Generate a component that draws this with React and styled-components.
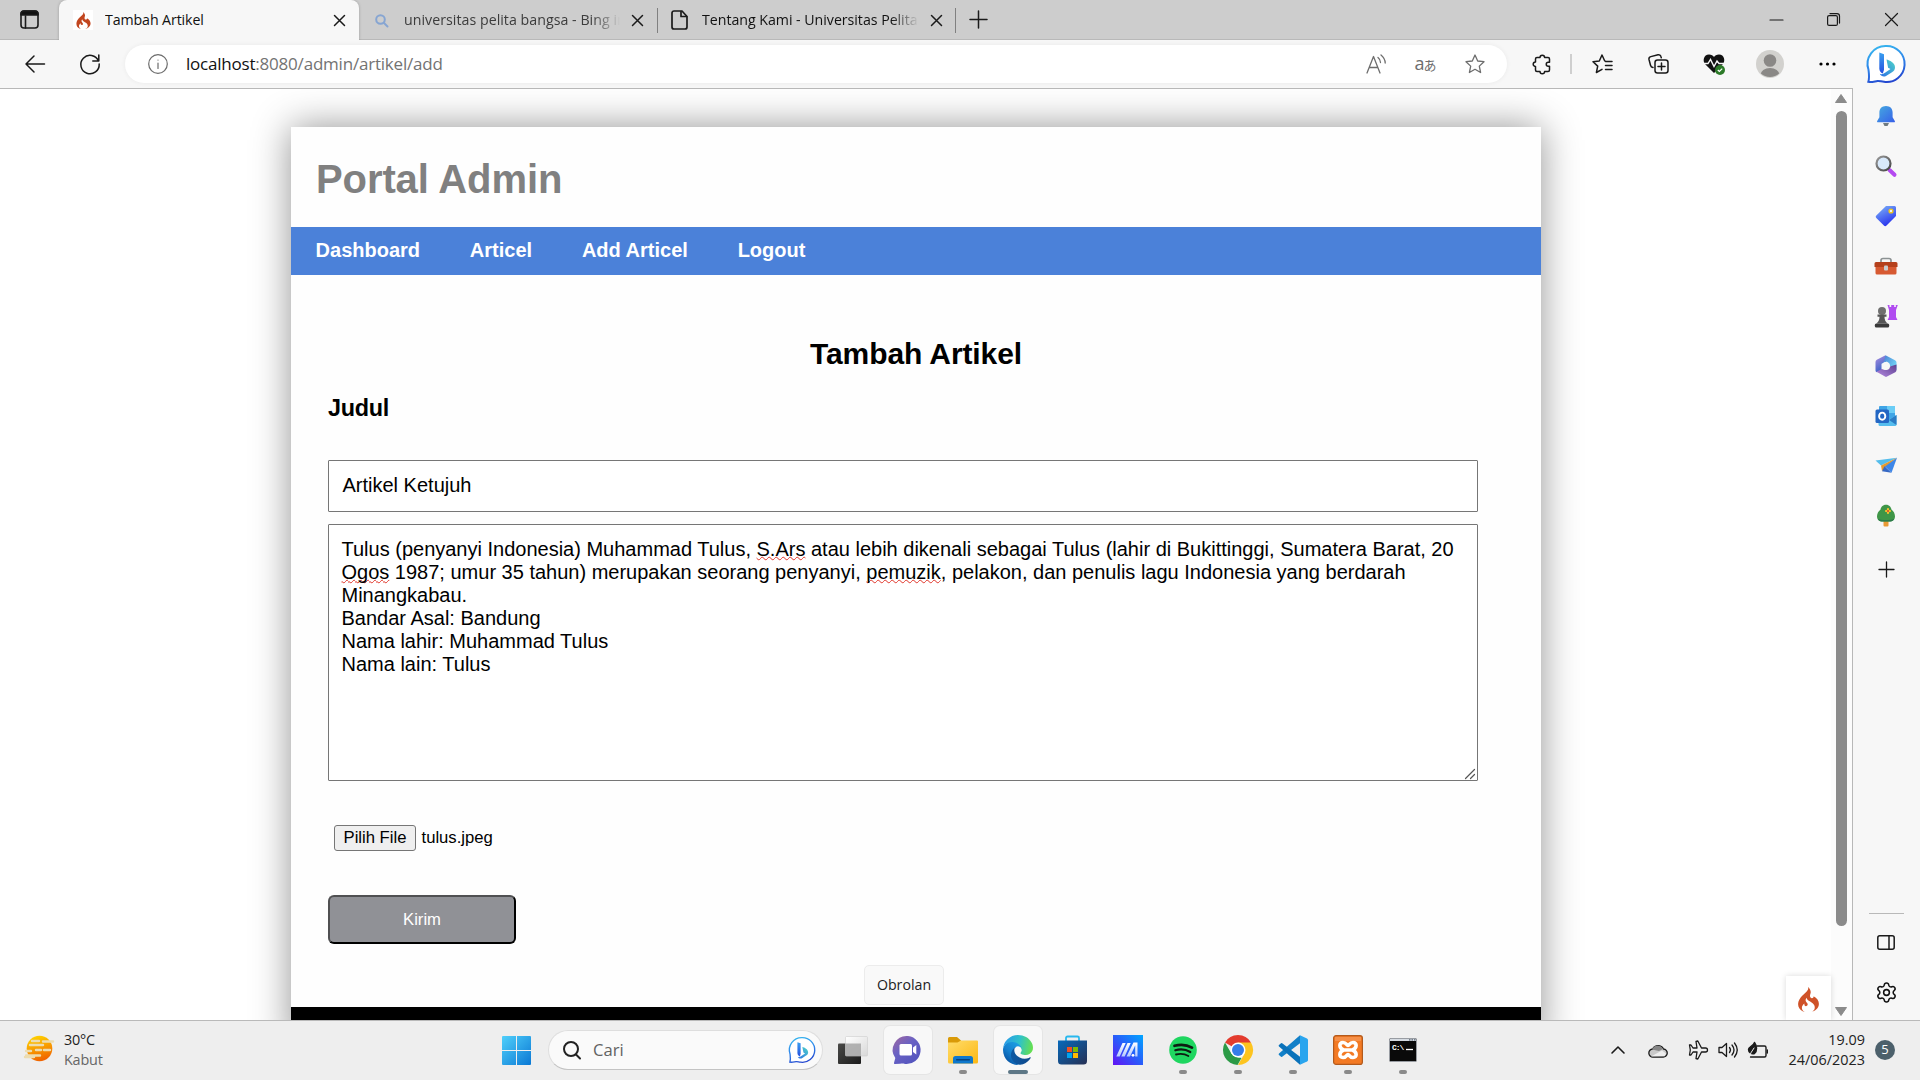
import React from "react";
import styled, { createGlobalStyle, css } from "styled-components";
import { Settings } from "lucide-react";
import { SiCodeigniter } from "react-icons/si";

const Global = createGlobalStyle`
  *, *::before, *::after { box-sizing: border-box; }
  html, body { margin: 0; padding: 0; overflow: hidden; }
  svg { display: block; flex: none; overflow: visible; }
  h1, h2, h3 { margin: 0; }
`;

const ui = `"Open Sans", "Noto Sans", sans-serif`;
const arial = `"Liberation Sans", Arial, sans-serif`;

const Screen = styled.div`
  width: 1920px;
  height: 1080px;
  display: flex;
  flex-direction: column;
  overflow: hidden;
  background: #fff;
  font-family: ${ui};
  color: #111;
`;

/* ---------- tab strip ---------- */
const TabStrip = styled.div`
  height: 40px;
  flex: none;
  display: flex;
  background: #cdcdcd;
  box-shadow: inset 0 -1px 0 #b9b9b9;
`;
const TabMenu = styled.div`
  width: 59px;
  height: 39px;
  display: flex;
  align-items: center;
  justify-content: center;
`;
const Tab = styled.div`
  width: ${(p) => p.$w}px;
  height: 40px;
  display: flex;
  align-items: center;
  padding: 0 ${(p) => p.$right}px 0 ${(p) => p.$left}px;
  ${(p) =>
    p.$active &&
    css`
      background: #f7f7f7;
      border-radius: 8px 8px 0 0;
      box-shadow: 0 0 3px rgba(0, 0, 0, 0.25);
      clip-path: inset(-4px -4px 0 -4px);
    `}
`;
const TabIcon = styled.div`
  width: 20px;
  height: 20px;
  flex: none;
  display: flex;
  align-items: center;
  justify-content: center;
  background: ${(p) => p.$bg || "none"};
`;
const TabTitle = styled.div`
  flex: 1;
  min-width: 0;
  margin-left: ${(p) => p.$gap}px;
  margin-right: ${(p) => p.$after}px;
  height: 22px;
  line-height: 21px;
  font-size: 14.2px;
  letter-spacing: ${(p) => p.$ls || 0}px;
  color: ${(p) => p.$color || "#111"};
  white-space: nowrap;
  overflow: hidden;
  ${(p) => p.$fade && css`mask-image: linear-gradient(to right, #000 calc(100% - 28px), transparent);`}
`;
const TabDivider = styled.div`
  width: 1px;
  height: 25px;
  margin-top: 8px;
  background: #808080;
`;
const NewTab = styled.div`
  width: 44px;
  height: 39px;
  display: flex;
  align-items: center;
  justify-content: center;
`;
const WindowControls = styled.div`
  margin-left: auto;
  height: 39px;
  display: flex;
`;
const WindowButton = styled.div`
  width: 57.5px;
  height: 39px;
  display: flex;
  align-items: center;
  justify-content: center;
`;

/* ---------- toolbar ---------- */
const Toolbar = styled.div`
  height: 48px;
  flex: none;
  display: flex;
  align-items: center;
  background: #f7f7f7;
`;
const Slot = styled.div`
  width: ${(p) => p.$w}px;
  height: 48px;
  flex: none;
  display: flex;
  align-items: center;
  justify-content: center;
`;
const AddressBar = styled.div`
  width: 1382px;
  height: 38px;
  margin-top: -1px;
  display: flex;
  align-items: center;
  background: #fff;
  border-radius: 19px;
  box-shadow: 0 0 5px rgba(0, 0, 0, 0.06);
`;
const Url = styled.div`
  flex: 1;
  margin-left: -4px;
  line-height: 24px;
  font-size: 17px;
  letter-spacing: -0.21px;
  color: #737373;
  span { color: #111; }
`;
const ToolDivider = styled.div`
  width: 2px;
  height: 20px;
  margin: 0 2px 0 1px;
  background: #cfcfcf;
`;
const Translate = styled.div`
  display: flex;
  align-items: baseline;
  font-size: 18px;
  line-height: 20px;
  color: #6d6d6d;
  span { font-family: "Noto Sans CJK JP", sans-serif; font-size: 13px; margin-left: -1px; }
`;

/* ---------- browser body ---------- */
const Body = styled.div`
  height: 932px;
  flex: none;
  display: flex;
  background: #f7f7f7;
`;
const Viewport = styled.div`
  position: relative;
  width: 1853px;
  display: flex;
  overflow: hidden;
  background: #fff;
  border-top: 1px solid #b8b8b8;
  border-right: 1px solid #b8b8b8;
`;
const Page = styled.div`
  width: 1831px;
  overflow: hidden;
  padding: 38px 0 0 291px;
  font-family: ${arial};
  color: #000;
`;
const Container = styled.div`
  width: 1250px;
  height: 920px;
  display: flex;
  flex-direction: column;
  background: #fefefe;
  box-shadow: 0 0 36px rgba(0, 0, 0, 0.43);
`;
const Brand = styled.h1`
  height: 100px;
  padding: 29px 25px 0;
  font-size: 40px;
  line-height: 46px;
  letter-spacing: -0.1px;
  color: #808080;
`;
const Nav = styled.nav`
  height: 48px;
  display: flex;
  gap: 49.8px;
  padding: 12px 24.6px 0;
  background: #4b81d9;
  color: #fff;
  font-size: 20px;
  line-height: 23px;
  font-weight: bold;
`;
const Form = styled.div`
  height: 732px;
  padding: 62px 63px 0 37px;
  display: flex;
  flex-direction: column;
  align-items: flex-start;
`;
const Heading = styled.h2`
  width: 1176px;
  font-size: 30px;
  line-height: 34px;
  letter-spacing: -0.1px;
  text-align: center;
`;
const Label = styled.h3`
  margin-top: 24px;
  font-size: 23.4px;
  line-height: 27px;
  letter-spacing: -0.3px;
`;
const TitleField = styled.div`
  width: 1150px;
  height: 52px;
  margin-top: 38px;
  padding: 13px 13.5px 0;
  border: 1px solid #767676;
  border-radius: 1px;
  background: #fff;
  font-size: 20px;
  line-height: 23px;
`;
const ContentField = styled.div`
  position: relative;
  width: 1150px;
  height: 257px;
  margin-top: 12px;
  padding: 13px 12.5px 0;
  border: 1px solid #767676;
  border-radius: 1px;
  background: #fff;
  font-size: 20px;
  line-height: 23px;
`;
const Line = styled.div`
  height: 23px;
  white-space: nowrap;
`;
const Misspelled = styled.span`
  text-decoration: underline wavy #e0352a 1px;
  text-decoration-skip-ink: none;
  text-underline-offset: 0px;
`;
const Grip = styled.div`
  position: absolute;
  right: 2px;
  bottom: 1px;
`;
const FileRow = styled.div`
  display: flex;
  align-items: center;
  gap: 5.500px;
  margin: 44px 0 0 6px;
  height: 26px;
  font-size: 16.67px;
`;
const FileButton = styled.div`
  width: 82px;
  height: 26px;
  border: 1px solid #767676;
  border-radius: 3px;
  background: #efefef;
  line-height: 24px;
  text-align: center;
`;
const Submit = styled.div`
  width: 188px;
  height: 49px;
  margin-top: 44px;
  border: 2px solid;
  border-color: #505052 #000 #000 #505052;
  border-radius: 6px;
  background: #909196;
  color: #fff;
  font-size: 16.67px;
  line-height: 45px;
  text-align: center;
`;
const Footer = styled.div`
  flex: 1;
  background: #000;
`;
const DebugBadge = styled.div`
  position: absolute;
  right: 21px;
  bottom: 0;
  width: 45px;
  height: 44px;
  display: flex;
  align-items: center;
  justify-content: center;
  background: #fff;
  box-shadow: 0 0 6px rgba(0, 0, 0, 0.15);
  color: #cf5228;
  padding: 2px 1px 0 0;
`;
const ScrollTrack = styled.div`
  width: 21px;
  display: flex;
  flex-direction: column;
  align-items: center;
  padding: 5px 1px 4px 0;
  background: #fcfcfc;
`;
const ScrollThumb = styled.div`
  width: 11px;
  height: 815px;
  margin-top: 8px;
  margin-bottom: auto;
  border-radius: 6px;
  background: #8b8b8b;
`;
const Sidebar = styled.div`
  width: 67px;
  display: flex;
  flex-direction: column;
  align-items: center;
  padding: 2.500px 1px 0 0;
`;
const SideItem = styled.div`
  width: 50px;
  height: ${(p) => p.$h || 50}px;
  flex: none;
  display: flex;
  align-items: center;
  justify-content: center;
`;
const SideRule = styled.div`
  width: 35px;
  height: 1px;
  margin-top: auto;
  background: #b9b9b9;
`;

/* ---------- taskbar ---------- */
const Taskbar = styled.div`
  position: relative;
  height: 60px;
  flex: none;
  display: flex;
  background: #eeeeee;
  border-top: 1px solid #b9b9b9;
`;
const Weather = styled.div`
  width: 489px;
  display: flex;
  padding: 9px 0 0 23px;
  gap: 9px;
  svg { margin-top: 5px; }
`;
const WeatherText = styled.div`
  font-size: 14.4px;
  line-height: 20px;
  letter-spacing: -0.2px;
  color: ${(p) => (p.$dim ? "#666" : "#222")};
`;
const TaskItem = styled.div`
  position: relative;
  width: ${(p) => p.$w || 55}px;
  height: 58px;
  flex: none;
  display: flex;
  align-items: center;
  justify-content: center;
`;
const TaskTile = styled.div`
  width: 48px;
  height: 48px;
  display: flex;
  align-items: center;
  justify-content: center;
  border-radius: 6px;
  ${(p) => p.$on && css`background: #f8f8f8; box-shadow: 0 0 0 1px #e5e5e5;`}
`;
const Running = styled.div`
  position: absolute;
  left: calc(50% - ${(p) => (p.$active ? 10 : 4)}px);
  bottom: 5px;
  width: ${(p) => (p.$active ? 20 : 8)}px;
  height: 4px;
  border-radius: 2px;
  background: ${(p) => (p.$active ? "#5d7786" : "#8a8a8a")};
`;
const SearchBox = styled.div`
  width: 275px;
  height: 40px;
  margin: 9px 2px 0 4px;
  padding: 0 7px 0 14px;
  display: flex;
  align-items: center;
  background: #fafafa;
  border: 1px solid #dedede;
  border-bottom-color: #c4c4c4;
  border-radius: 20px;
`;
const SearchText = styled.div`
  flex: 1;
  margin-left: 12px;
  font-size: 16.6px;
  line-height: 24px;
  color: #626262;
`;
const Tray = styled.div`
  margin-left: auto;
  width: 320px;
  display: flex;
  height: 58px;
  align-items: center;
`;
const TrayItem = styled.div`
  width: ${(p) => p.$w}px;
  display: flex;
  justify-content: center;
`;
const Clock = styled.div`
  width: 89px;
  text-align: right;
  font-size: 14.4px;
  line-height: 20px;
  color: #222;
  margin-top: -1px;
`;
const Badge = styled.div`
  width: 20px;
  height: 20px;
  margin-left: 10px;
  border-radius: 50%;
  background: #4c606b;
  color: #fff;
  font-size: 13px;
  line-height: 19px;
  text-align: center;
`;
const Tooltip = styled.div`
  position: absolute;
  left: 864px;
  top: -56px;
  width: 80px;
  height: 40px;
  border: 1px solid #ececec;
  border-radius: 5px;
  background: #f9f9f9;
  font-size: 14.2px;
  line-height: 37px;
  text-align: center;
  color: #222;
`;

/* ---------- icons ---------- */
const S = ({ w, h = w, vb, sw = 1.3, c = "#1a1a1a", children }) => (
  <svg width={w} height={h} viewBox={vb || `0 0 ${w} ${h}`} fill="none" stroke={c} strokeWidth={sw} strokeLinecap="round" strokeLinejoin="round">
    {children}
  </svg>
);
const F = ({ w, h = w, vb, children }) => (
  <svg width={w} height={h} viewBox={vb || `0 0 ${w} ${h}`}>{children}</svg>
);
const Cross = ({ size = 11, sw = 1.5 }) => (
  <S w={size} sw={sw}><path d={`M.5 .5L${size - 0.5} ${size - 0.5}M${size - 0.5} .5L.5 ${size - 0.5}`} /></S>
);
const Plus = ({ size, sw = 1.3 }) => (
  <S w={size} sw={sw}><path d={`M0 ${size / 2}H${size}M${size / 2} 0V${size}`} /></S>
);

const BingMark = ({ size, id }) => (
  <F w={size} vb="0 0 38 38">
    <defs>
      <linearGradient id={id} x1="0.3" y1="0" x2="0.6" y2="1"><stop offset="0" stopColor="#36b4ee" /><stop offset="0.5" stopColor="#2f86ea" /><stop offset="1" stopColor="#2345cf" /></linearGradient>
      <linearGradient id={id + "b"} x1="0" y1="0" x2="0" y2="1"><stop offset="0" stopColor="#3aa0f0" /><stop offset="1" stopColor="#2550df" /></linearGradient>
      <linearGradient id={id + "c"} x1="1" y1="0" x2="0" y2="1"><stop offset="0" stopColor="#4fd6c8" /><stop offset="1" stopColor="#2b6fe6" /></linearGradient>
    </defs>
    <path d="M19 1a18 18 0 1 1-2 35.8c-3-.3-4.500-1-6.500-.8-3 .4-6 1.500-9.200.8 1.400-4 .7-8 .2-12A18 18 0 0 1 19 1Z" fill="#fff" stroke={`url(#${id})`} strokeWidth="2" />
    <path d="M12.300 7.500 17 9.200v15.500l-1.200 3.700c-2.300-.8-3.500-2.800-3.500-5Z" fill={`url(#${id}b)`} />
    <path d="M19.500 14.500c3 .8 8.500 3 8.500 7.700 0 2-1 4-3 5L19 31c-2 1.200-5 .5-6.200-2.200 2 .9 3.600 0 5.200-1l5.500-3.800-2.400-1.200Z" fill={`url(#${id}c)`} />
  </F>
);

const TabMenuIcon = () => (
  <S w={19} sw={1.6}><rect x="1" y="1" width="17" height="17" rx="3" /><path d="M1 5V4a3 3 0 0 1 3-3h11a3 3 0 0 1 3 3v1Z" fill="#111" /><path d="M5.500 6v12" /></S>
);
const PageIcon = () => (
  <S w={17} h={20} sw={1.7}><path d="M3 1h8l5 5.500V17a2 2 0 0 1-2 2H3a2 2 0 0 1-2-2V3a2 2 0 0 1 2-2Z" /><path d="M10 1.500V6.500h5.500" /></S>
);
const starPath = "M10 1l2.700 6 6.300.7-4.700 4.400 1.300 6.400L10 15.300 4.400 18.500l1.300-6.400L1 7.700 7.300 7Z";

/* ---------- sidebar icons ---------- */
const Bell = () => (
  <F w={20} h={22}>
    <defs><linearGradient id="bell" x1="0" y1="0" x2="1" y2="1"><stop offset="0" stopColor="#46abe0" /><stop offset="1" stopColor="#365fe8" /></linearGradient></defs>
    <path d="M7 18h6l-1.500 3h-3Z" fill="#707b80" />
    <path d="M10 1c4.200 0 6.600 2.800 6.600 6.500v4.800l2.200 3.700c.4.700 0 1.300-.8 1.300H2c-.8 0-1.200-.6-.8-1.300l2.200-3.700V7.500C3.400 3.800 5.800 1 10 1Z" fill="url(#bell)" />
  </F>
);
const Lens = () => (
  <F w={22}>
    <defs><linearGradient id="lg" x1="0" y1="0" x2="1" y2="1"><stop offset="0" stopColor="#999" /><stop offset="1" stopColor="#444" /></linearGradient></defs>
    <path d="M14.500 15l5 4.800" stroke="#b44af0" strokeWidth="4" strokeLinecap="round" />
    <circle cx="8.500" cy="8.500" r="7" fill="#d8e9fb" stroke="url(#lg)" strokeWidth="2.200" />
  </F>
);
const Tag = () => (
  <F w={22}>
    <defs><linearGradient id="tg" x1="0" y1="0" x2="0.5" y2="1"><stop offset="0" stopColor="#80b8f8" /><stop offset="1" stopColor="#2a35ee" /></linearGradient></defs>
    <path d="M11 1h8.500A1.500 1.500 0 0 1 21 2.500V11L11.500 20.600a1.800 1.800 0 0 1-2.600 0L1.300 13a1.800 1.800 0 0 1 0-2.600Z" fill="url(#tg)" />
    <circle cx="16" cy="6" r="1.900" fill="#e8f0ff" stroke="#f0c419" strokeWidth="1.400" />
  </F>
);
const Briefcase = () => (
  <F w={24} h={18}>
    <path d="M7 6V3.500Q7 1.500 9 1.500h6q2 0 2 2V6" fill="none" stroke="#8c9293" strokeWidth="1.700" />
    <rect x="1.500" y="6" width="21" height="11.500" rx="1.500" fill="#d75a32" />
    <path d="M2 5h20a1.500 1.500 0 0 1 1.500 1.500V10H.5V6.500A1.500 1.500 0 0 1 2 5Z" fill="#b5401c" />
    <rect x="10" y="8.500" width="4" height="5" rx="1" fill="#c9cdd0" />
  </F>
);
const Chess = () => (
  <F w={24}>
    <path d="M13.500 1h2v2h1.700V1h3v2h1.600V1h2L22 6v7l1.500 3H13.600L15 13V6Z" fill="#b04cf0" />
    <circle cx="8" cy="7" r="4" fill="#6f6f6f" />
    <path d="M3.500 10.500h9v2.300H10.500c0 3 .8 4.700 3 6.700h-11c2.200-2 3-3.700 3-6.700h-2Z" fill="#565656" />
    <rect x=".8" y="19.500" width="14.400" height="4" rx="1.500" fill="#3a3a3a" />
  </F>
);
const M365 = () => (
  <F w={22}>
    <defs>
      <linearGradient id="m1" x1="0" y1="0" x2="1" y2="0.6"><stop offset="0" stopColor="#4674d0" /><stop offset="1" stopColor="#6fd3f5" /></linearGradient>
      <linearGradient id="m2" x1="0" y1="0" x2="0.4" y2="1"><stop offset="0" stopColor="#b08fe0" /><stop offset="1" stopColor="#3c63c8" /></linearGradient>
      <linearGradient id="m3" x1="0" y1="1" x2="1" y2="0"><stop offset="0" stopColor="#b58ae0" /><stop offset="1" stopColor="#5c3f90" /></linearGradient>
    </defs>
    <path d="M10.500.3 20 5.200Q21.500 6 21.500 7.500V15L15 11 12 6.500 6 9Z" fill="url(#m1)" />
    <path d="M10.500.2 1.800 4.800Q.5 5.500.5 7v8.500q0 1.500 1.500 1.700L6.500 15V8.500L9 7Z" fill="url(#m2)" />
    <path d="M1.500 16.800 6.500 14 11 15l4-3.500 6.500-2V15q0 1.500-1.200 2.200L12 21.600q-1 .6-2 0Z" fill="url(#m3)" />
    <circle cx="11" cy="11" r="4" fill="#f7f7f7" />
  </F>
);
const Outlook = () => (
  <F w={22}>
    <path d="M5 1h14a1 1 0 0 1 1 1v17H4V2a1 1 0 0 1 1-1Z" fill="#3fa5e6" />
    <path d="M12 1h8v7h-8Z" fill="#6bcdf6" />
    <path d="M3.500 12 13 15l8.500-5v9.500a1.500 1.500 0 0 1-1.500 1.500H5a1.500 1.500 0 0 1-1.500-1.500Z" fill="#55bdee" />
    <path d="M21.500 10 14 15l7.500 5Z" fill="#2b7bc4" />
    <rect x=".5" y="4.500" width="13.500" height="13.500" rx="1.500" fill="#2367c4" />
    <ellipse cx="7.200" cy="11.200" rx="3.100" ry="3.600" fill="none" stroke="#fff" strokeWidth="1.900" />
  </F>
);
const PaperPlane = () => (
  <F w={23} h={17}>
    <path d="M.5 3.500 22 .8 6 8.500Z" fill="#54bdec" />
    <path d="M22 .8 6 8.500l1 5.500 3.500-3.700Z" fill="#e69a2e" />
    <path d="M22 .8 10 9.500l6.500 6.300Z" fill="#3d86e8" />
    <path d="M9.500 9.300 16.500 15.800 7 14.200Z" fill="#3568c4" />
  </F>
);
const Tree = () => (
  <F w={20} h={23}>
    <rect x="7.500" y="15" width="5" height="7.500" rx="1" fill="#e99a35" />
    <path d="M10 .8c3.500 0 5 2.500 5.600 5 2 1.200 3.400 4.200 3.400 6.700 0 3-2.500 5-5 5H6c-2.500 0-5-2-5-5 0-2.500 1.400-5.500 3.400-6.700C5 3.300 6.500.8 10 .8Z" fill="#3f9647" />
    <path d="M1.500 14.500c3 2 14 2 17 0-.8 2-2.500 3-4.500 3H6c-2 0-3.700-1-4.500-3Z" fill="#2c7a4b" />
    <path d="M12 5v4M10 7h4" stroke="#f3bf2d" strokeWidth="2.200" strokeLinecap="round" /><circle cx="12" cy="7" r="1.100" fill="#d64a32" />
  </F>
);

/* ---------- taskbar icons ---------- */
const SunFog = () => (
  <F w={32} h={28}>
    <defs><linearGradient id="sun" x1="0.3" y1="0" x2="0.6" y2="1"><stop offset="0" stopColor="#ffd400" /><stop offset="1" stopColor="#f06000" /></linearGradient></defs>
    <circle cx="16.500" cy="13.500" r="12.800" fill="url(#sun)" />
    <g stroke="#ecdcb0" strokeWidth="2.400" strokeLinecap="round"><path d="M9 6h7M7 10h13M20 6.500h10M13 15h5M21 15h6M3 16h5M3 20.500h14M2 22h9" /></g>
  </F>
);
const WinLogo = () => (
  <F w={29}>
    <defs><linearGradient id="win" x1="0" y1="0" x2="1" y2="1" gradientUnits="objectBoundingBox"><stop offset="0" stopColor="#50d0fb" /><stop offset="1" stopColor="#0a78d4" /></linearGradient></defs>
    <path d="M1 0h13v14H0V1a1 1 0 0 1 1-1ZM15 0h13a1 1 0 0 1 1 1v13H15ZM0 15h14v14H1a1 1 0 0 1-1-1ZM15 15h14v13a1 1 0 0 1-1 1H15Z" fill="url(#win)" />
  </F>
);
const TaskView = () => (
  <F w={30} h={28}>
    <defs>
      <linearGradient id="tv" x1="0" y1="0" x2="1" y2="1"><stop offset="0" stopColor="#4a4a48" /><stop offset="1" stopColor="#1b1b1b" /></linearGradient>
      <linearGradient id="tv2" x1="0" y1="0" x2="1" y2="1"><stop offset="0" stopColor="#fff" /><stop offset="1" stopColor="#d8d8d8" /></linearGradient>
    </defs>
    <rect x="0" y="7.500" width="23" height="20.500" rx="1" fill="url(#tv)" />
    <rect x="7.500" y=".5" width="22" height="19.500" rx="1" fill="url(#tv2)" stroke="#ccc" strokeWidth=".6" />
    <path d="M7.500 7.500H23V20H8.500a1 1 0 0 1-1-1Z" fill="#a6a6a6" opacity=".85" />
  </F>
);
const Chat = () => (
  <F w={30}>
    <defs><linearGradient id="chat" x1="0" y1="0" x2="0.8" y2="1"><stop offset="0" stopColor="#a3679e" /><stop offset="0.45" stopColor="#6a62c4" /><stop offset="1" stopColor="#5254be" /></linearGradient></defs>
    <path d="M15 1a14 14 0 1 1-3 28c-2-.7-3-.5-5-.2l-5 .3c-1 0-1.200-.8-.9-1.600L2.300 23A14 14 0 0 1 15 1Z" fill="url(#chat)" />
    <rect x="6.500" y="9" width="12.500" height="11.500" rx="1.500" fill="#fff" /><path d="M20 12.500 23.300 10v9.500L20 17Z" fill="#fff" />
  </F>
);
const Folder = () => (
  <F w={30} h={27}>
    <defs><linearGradient id="fo" x1="0" y1="0" x2="1" y2="1"><stop offset="0" stopColor="#ffdc6a" /><stop offset="1" stopColor="#fcb813" /></linearGradient></defs>
    <path d="M0 7V1.500A1.500 1.500 0 0 1 1.500 0H9l4 3.500V7Z" fill="#d99a08" />
    <path d="M0 5.500h9.500L13 3.500h16a1 1 0 0 1 1 1V25a1.500 1.500 0 0 1-1.500 1.500h-27A1.500 1.500 0 0 1 0 25Z" fill="url(#fo)" />
    <path d="M5 26.500v-5a2.500 2.500 0 0 1 2.500-2.500h15a2.500 2.500 0 0 1 2.500 2.500v5Z" fill="#0f78cc" /><rect x="8" y="22" width="14" height="1.500" rx=".7" fill="#07427f" />
  </F>
);
const Edge = () => (
  <F w={30} vb="0 0 256 256">
    <defs>
      <linearGradient id="e1" x1="63" y1="177" x2="241" y2="177" gradientUnits="userSpaceOnUse"><stop offset="0" stopColor="#0c59a4" /><stop offset="1" stopColor="#114a8b" /></linearGradient>
      <linearGradient id="e2" x1="157" y1="99" x2="46" y2="221" gradientUnits="userSpaceOnUse"><stop offset="0" stopColor="#1b9de2" /><stop offset=".6" stopColor="#1580cf" /><stop offset="1" stopColor="#0a5cab" /></linearGradient>
      <linearGradient id="e3" x1="20" y1="60" x2="250" y2="110" gradientUnits="userSpaceOnUse"><stop offset="0" stopColor="#2a9fe6" /><stop offset=".5" stopColor="#2fc2c9" /><stop offset="1" stopColor="#66e04f" /></linearGradient>
    </defs>
    <path d="M231 190.500a93 93 0 0 1-10.500 4.700 101.700 101.700 0 0 1-35.900 6.400c-47.300 0-88.500-32.500-88.500-74.300a31.500 31.500 0 0 1 16.400-27.300c-42.800 1.800-53.800 46.400-53.800 72.500 0 73.900 68.100 81.400 82.800 81.400 7.900 0 19.800-2.300 27-4.600l1.300-.4a128.300 128.300 0 0 0 66.600-52.800 4 4 0 0 0-5.400-5.600Z" fill="url(#e1)" />
    <path d="M105.700 241.400A79.200 79.200 0 0 1 83 220.100a80.700 80.700 0 0 1 29.500-120c3.200-1.500 8.500-4.100 15.600-4a32.400 32.400 0 0 1 25.700 13 31.900 31.900 0 0 1 6.300 18.700c0-.2 24.500-79.600-80-79.600-43.900 0-80 41.700-80 78.200a130.200 130.200 0 0 0 12.100 56 128 128 0 0 0 156.400 67 75.500 75.500 0 0 1-62.800-8Z" fill="url(#e2)" />
    <path d="M152.300 148.900c-.9 1-3.400 2.500-3.400 5.600 0 2.600 1.700 5.200 4.800 7.300 14.300 10 41.400 8.600 41.500 8.600a59.600 59.600 0 0 0 30.300-8.300 61.400 61.400 0 0 0 30.400-52.900c.3-22.400-8-37.300-11.300-43.900C223.500 23.900 177.700 0 128 0A128 128 0 0 0 0 126.200c.5-36.500 36.800-66 80-66 3.500 0 23.500.3 42 10a72.600 72.600 0 0 1 30.900 29.300c6.100 10.600 7.200 24.100 7.200 29.500s-2.700 13.300-7.800 19.900Z" fill="url(#e3)" />
  </F>
);
const Store = () => (
  <F w={29} h={30}>
    <defs><linearGradient id="st" x1="0" y1="0" x2="1" y2="1"><stop offset="0" stopColor="#0669bb" /><stop offset="1" stopColor="#273054" /></linearGradient></defs>
    <path d="M8 8V3a1.500 1.500 0 0 1 1.500-1.500h10A1.500 1.500 0 0 1 21 3v5" fill="none" stroke="#28b8ee" strokeWidth="1.800" />
    <path d="M0 5.500h29V26a3.500 3.500 0 0 1-3.500 3.500h-22A3.500 3.500 0 0 1 0 26Z" fill="url(#st)" />
    <path d="M9 12h5v5H9Z" fill="#f25022" /><path d="M15 12h5v5h-5Z" fill="#7fba00" /><path d="M9 18h5v5H9Z" fill="#00a4ef" /><path d="M15 18h5v5h-5Z" fill="#ffb900" />
  </F>
);
const Asus = () => (
  <F w={30}>
    <defs>
      <linearGradient id="as" x1="0" y1="1" x2="1" y2="0"><stop offset="0" stopColor="#6312f4" /><stop offset=".5" stopColor="#295cfa" /><stop offset="1" stopColor="#00a6ff" /></linearGradient>
      <linearGradient id="as2" x1="0" y1="0" x2="0" y2="1"><stop offset="0" stopColor="#fff" /><stop offset="1" stopColor="#b4caff" /></linearGradient>
    </defs>
    <path d="M0 0h30v30H0Z" fill="url(#as)" />
    <path d="M9.500 8h3.200L6.700 21.500H3.300ZM14.500 8h3.200l-6 13.500H8.300ZM20.500 7.500h4V21.500h-2.300V10.500L17 21.500H13.500Z" fill="url(#as2)" />
    <circle cx="20" cy="20.300" r="1.400" fill="#fff" />
  </F>
);
const Spotify = () => (
  <F w={28}>
    <circle cx="14" cy="14" r="13.800" fill="#1fd660" />
    <g fill="none" stroke="#0d1c12" strokeLinecap="round"><path d="M5.500 9.800c6-1.600 12.500-1 17.500 1.800" strokeWidth="2.700" /><path d="M6.300 14.300c5-1.400 10.700-.8 15 1.700" strokeWidth="2.200" /><path d="M7 18.500c4.300-1 8.800-.6 12.400 1.500" strokeWidth="1.800" /></g>
  </F>
);
const Chrome = () => (
  <F w={30}>
    <path d="M15 15 2 7.500A15 15 0 0 1 28 7.500Z" fill="#e33b2e" />
    <path d="M15 7.500h13A15 15 0 0 1 15 30l6.500-11.300Z" fill="#fdc41f" />
    <path d="M2 7.500 8.500 18.800 15 22.500l3.500 .5-4 7A15 15 0 0 1 2 7.500Z" fill="#2b9a46" />
    <circle cx="15" cy="15" r="7.500" fill="#fff" /><circle cx="15" cy="15" r="6" fill="#357de8" />
  </F>
);
const VSCode = () => (
  <F w={30}>
    <path d="M22 .3 29 3.500q1 .5 1 1.500v20q0 1-1 1.500l-7 3.200Z" fill="#2aa5ee" />
    <path d="M22 .3 1 18.500a1 1 0 0 0 0 1.500l1.700 1.600q.7.600 1.500.1L22 8.200Z" fill="#1280c8" />
    <path d="M22 29.700 1 11.500A1 1 0 0 1 1 10l1.700-1.600q.7-.6 1.500-.1L22 21.800Z" fill="#0a72ba" />
  </F>
);
const Xampp = () => (
  <F w={30}>
    <rect x=".6" y=".6" width="28.800" height="28.800" rx="2.500" fill="#f37a24" stroke="#b35a1c" strokeWidth="1.200" />
    <path d="M2 2h26v4H2Z" fill="#f79a58" opacity=".7" />
    <path d="M11 15H19M10.500 15C6 13 5.500 7.500 10 7.500c3.500 0 3.500 3 5 3s1.500-3 5-3c4.500 0 4 5.500-.5 7.500 4.500 2 5 7.500.5 7.500-3.500 0-3.500-3-5-3s-1.500 3-5 3c-4.500 0-4-5.500.5-7.500Z" fill="none" stroke="#fff" strokeWidth="3.600" strokeLinejoin="round" />
  </F>
);
const Cmd = () => (
  <F w={28} h={24}>
    <rect x=".5" y=".5" width="27" height="23" rx="1" fill="#0a0a0a" stroke="#989ca2" />
    <path d="M1 1h26v2H1Z" fill="#d5dbe2" /><path d="M20 1.300h1.500v1.200H20ZM22.500 1.300H24v1.200h-1.500ZM25 1.300h1.500v1.200H25Z" fill="#55606e" />
    <text x="3" y="12" fill="#fff" fontFamily="Liberation Mono, monospace" fontSize="8" fontWeight="bold" letterSpacing="-1">C:\</text>
    <path d="M17 11.500h7" stroke="#fff" strokeWidth="1.300" />
  </F>
);

const apps = [
  { icon: <TaskView /> },
  { icon: <Chat />, on: true },
  { icon: <Folder />, run: true },
  { icon: <Edge />, on: true, run: true, active: true },
  { icon: <Store /> },
  { icon: <Asus /> },
  { icon: <Spotify />, run: true },
  { icon: <Chrome />, run: true },
  { icon: <VSCode />, run: true },
  { icon: <Xampp />, run: true },
  { icon: <Cmd />, run: true },
];
const sideIcons = [Bell, Lens, Tag, Briefcase, Chess, M365, Outlook, PaperPlane, Tree];

export default function App() {
  return (
    <Screen>
      <Global />
      <TabStrip>
        <TabMenu><TabMenuIcon /></TabMenu>
        <Tab $w={300} $left={14} $right={14} $active>
          <TabIcon $bg="#fff"><SiCodeigniter size={17} color="#c2461f" /></TabIcon>
          <TabTitle $gap={12} $after={12} $ls={-0.1}>Tambah Artikel</TabTitle>
          <Cross />
        </Tab>
        <Tab $w={298} $left={12} $right={14}>
          <TabIcon><S w={13} c="#86a5d2" sw={2}><circle cx="5.500" cy="5.500" r="4.300" /><path d="m9 9 3.500 3.500" /></S></TabIcon>
          <TabTitle $gap={13} $after={12} $color="#3c3c3c" $ls={0.03} $fade>universitas pelita bangsa - Bing im</TabTitle>
          <Cross />
        </Tab>
        <TabDivider />
        <Tab $w={297} $left={11} $right={13}>
          <TabIcon><PageIcon /></TabIcon>
          <TabTitle $gap={13} $after={12} $ls={-0.03} $fade>Tentang Kami - Universitas Pelita</TabTitle>
          <Cross />
        </Tab>
        <TabDivider />
        <NewTab><Plus size={17} sw={1.5} /></NewTab>
        <WindowControls>
          <WindowButton><S w={13} h={2} sw={1.2}><path d="M0 1h13" /></S></WindowButton>
          <WindowButton><S w={13} sw={1.2}><rect x=".6" y="2.600" width="9.800" height="9.800" rx="1.500" /><path d="M3 .6h7a2.500 2.500 0 0 1 2.500 2.500v7" /></S></WindowButton>
          <WindowButton><Cross size={13} sw={1.2} /></WindowButton>
        </WindowControls>
      </TabStrip>

      <Toolbar>
        <Slot $w={70}><S w={20} h={18} sw={1.5}><path d="M19.500 9H1M9 1 1 9l8 8" /></S></Slot>
        <Slot $w={40}><S w={20} sw={1.5}><path d="M18.500 7A9.200 9.200 0 1 0 19.200 10M18.800 1v6h-6" /></S></Slot>
        <Slot $w={15} />
        <AddressBar>
          <Slot $w={65}><S w={20} sw={1.200} c="#6b6b6b"><circle cx="10" cy="10" r="9.300" /><path d="M10 9v5.500" /><path d="M10 6v.1" sw={2} /></S></Slot>
          <Url><span>localhost</span>:8080/admin/artikel/add</Url>
          <Slot $w={50}><S w={20} c="#6d6d6d"><path d="M1 19 7.500 2.500 14 19M3.300 13.500h8.400" /><path d="M12 3.500q2.500 2 2.500 5M15 1q4.200 3.500 4.200 8" /></S></Slot>
          <Slot $w={49}><Translate>a<span>あ</span></Translate></Slot>
          <Slot $w={50}><S w={20} c="#6d6d6d"><path d={starPath} /></S></Slot>
          <Slot $w={7} />
        </AddressBar>
        <Slot $w={6} />
        <Slot $w={56}>
          <S w={19} h={20} sw={1.500}><path d="M5 3.500h3a2.300 2.300 0 0 1 4.600 0H16a1.500 1.500 0 0 1 1.500 1.500v3.200h-1.200a2 2 0 0 0 0 4.100h1.200V16a1.500 1.500 0 0 1-1.500 1.500h-3.400a2.300 2.300 0 0 1-4.600 0H5A1.500 1.500 0 0 1 3.500 16v-3.500a2.300 2.300 0 0 1 0-4.600V5A1.500 1.500 0 0 1 5 3.500Z" /></S>
        </Slot>
        <ToolDivider />
        <Slot $w={57}><S w={21} h={20} sw={1.500}><path d="M13 7 12.500 6.500 10 1 7.300 7 1 7.700l4.700 4.400-1.300 6.400 5.600-3.200M13.500 7.500h6.500M13.500 11.500h6.500M13.500 15.500h6.500" /></S></Slot>
        <Slot $w={55}><S w={21} h={20} sw={1.500}><rect x="7" y="6" width="13" height="13" rx="2.500" /><path d="M13.500 9v7M10 12.500h7M5 13.500A3 3 0 0 1 2.500 11.300L1 5.500A2.500 2.500 0 0 1 2.800 2.600L10 .8a2.500 2.500 0 0 1 3 1.900l.3 1" /></S></Slot>
        <Slot $w={55}>
          <F w={22} h={22}>
            <path d="M11 20 2 11C-.5 8 .5 1.500 6 1.500c2.500 0 4 1.200 5 2.500 1-1.300 2.500-2.500 5-2.500C21.500 1.500 22.500 8 20 11Z" fill="#111" />
            <path d="M0 10.500h5l2.500-4 3.500 7 3-5.500 2 2.500h5" fill="none" stroke="#f7f7f7" strokeWidth="1.400" />
            <circle cx="17" cy="17" r="5" fill="#2c7a28" /><path d="m14.800 17 1.600 1.500 2.800-2.800" stroke="#fff" strokeWidth="1.200" fill="none" />
          </F>
        </Slot>
        <Slot $w={57}>
          <F w={28}><clipPath id="av"><circle cx="14" cy="14" r="13" /></clipPath><circle cx="14" cy="14" r="14" fill="#d2d1ce" /><circle cx="14" cy="10.500" r="6.300" fill="#8a8886" /><ellipse cx="14" cy="25" rx="9.500" ry="7" fill="#8a8886" clipPath="url(#av)" /></F>
        </Slot>
        <Slot $w={58}><F w={17} h={4}><circle cx="2" cy="2" r="1.600" /><circle cx="8.500" cy="2" r="1.600" /><circle cx="15" cy="2" r="1.600" /></F></Slot>
        <Slot $w={60}><BingMark size={38} id="bg1" /></Slot>
      </Toolbar>

      <Body>
        <Viewport>
          <Page>
            <Container>
              <Brand>Portal Admin</Brand>
              <Nav><span>Dashboard</span><span>Articel</span><span>Add Articel</span><span>Logout</span></Nav>
              <Form>
                <Heading>Tambah Artikel</Heading>
                <Label>Judul</Label>
                <TitleField>Artikel Ketujuh</TitleField>
                <ContentField>
                  <Line>Tulus (penyanyi Indonesia) Muhammad Tulus, <Misspelled>S.Ars</Misspelled> atau lebih dikenali sebagai Tulus (lahir di Bukittinggi, Sumatera Barat, 20</Line>
                  <Line><Misspelled>Ogos</Misspelled> 1987; umur 35 tahun) merupakan seorang penyanyi, <Misspelled>pemuzik</Misspelled>, pelakon, dan penulis lagu Indonesia yang berdarah</Line>
                  <Line>Minangkabau.</Line>
                  <Line>Bandar Asal: Bandung</Line>
                  <Line>Nama lahir: Muhammad Tulus</Line>
                  <Line>Nama lain: Tulus</Line>
                  <Grip><S w={10} c="#555" sw={1.200}><path d="M.5 9.500 9.500 .5M5.500 9.500l4-4" /></S></Grip>
                </ContentField>
                <FileRow><FileButton>Pilih File</FileButton><span>tulus.jpeg</span></FileRow>
                <Submit>Kirim</Submit>
              </Form>
              <Footer />
            </Container>
          </Page>
          <ScrollTrack>
            <F w={12} h={9}><path d="M6 .5 11.500 8.500H.5Z" fill="#8b8b8b" stroke="#8b8b8b" strokeLinejoin="round" /></F>
            <ScrollThumb />
            <F w={12} h={9}><path d="M6 8.500 11.500 .5H.5Z" fill="#8b8b8b" stroke="#8b8b8b" strokeLinejoin="round" /></F>
          </ScrollTrack>
          <DebugBadge><SiCodeigniter size={25} /></DebugBadge>
        </Viewport>
        <Sidebar>
          {sideIcons.map((Icon, i) => <SideItem key={i}><Icon /></SideItem>)}
          <SideItem $h={58}><Plus size={15} /></SideItem>
          <SideRule />
          <SideItem $h={56}><S w={18} h={15} sw={1.500}><rect x=".8" y=".8" width="16.400" height="13.400" rx="2" /><path d="M12 1v13" /></S></SideItem>
          <SideItem $h={44}><Settings size={23} strokeWidth={1.600} color="#111" /></SideItem>
          <SideItem $h={6} />
        </Sidebar>
      </Body>

      <Taskbar>
        <Weather>
          <SunFog />
          <div><WeatherText>30°C</WeatherText><WeatherText $dim>Kabut</WeatherText></div>
        </Weather>
        <TaskItem><WinLogo /></TaskItem>
        <SearchBox>
          <S w={18} h={19} sw={2} c="#222"><circle cx="8" cy="8" r="7" /><path d="m13 13.500 4 4" sw={3} /></S>
          <SearchText>Cari</SearchText>
          <BingMark size={26} id="bg2" />
        </SearchBox>
        {apps.map((a, i) => (
          <TaskItem key={i}>
            <TaskTile $on={a.on}>{a.icon}</TaskTile>
            {a.run && <Running $active={a.active} />}
          </TaskItem>
        ))}
        <Tray>
          <TrayItem $w={36}><S w={14} h={8} sw={1.600}><path d="m1 7 6-6 6 6" /></S></TrayItem>
          <TrayItem $w={44}><S w={20} h={15} sw={1.300}><path d="M5 14a4 4 0 0 1-.3-8A6 6 0 0 1 15.500 6 4 4 0 0 1 15 14Z" fill="#c9c9c9" /><path d="M4 6.500A6 6 0 0 1 15 6l-4 2Z" fill="#858585" stroke="none" /><path d="M3 13.500 14 7.500l4 3-1.500 2.800Z" fill="#eee" stroke="none" /></S></TrayItem>
          <TrayItem $w={36}><S w={20} h={20} sw={1.300}><path d="M8 1.500 9.800 1 13.500 8h4a2 2 0 0 1 0 4h-4L9.800 19 8 18.500 9 12H5l-2 3H1.500L2.300 10 1.500 5H3l2 3h4Z" /></S></TrayItem>
          <TrayItem $w={24}><S w={20} h={16} sw={1.300}><path d="M1 5.500h3L8.500 1.500v13L4 10.500H1ZM11.500 5.500q2 2.500 0 5M14 3q4 5 0 10M16.500 1q5.500 7 0 14" /></S></TrayItem>
          <TrayItem $w={36}><S w={20} h={17} sw={1.400}><path d="M9 4h7.500A1.500 1.500 0 0 1 18 5.500v8a1.500 1.500 0 0 1-1.500 1.500h-14" /><path d="M19.300 8v3" sw={2} /><path d="M6.500.5C9 4 9.500 9 6.500 11.500c-3 1-6-1-6-4S5 5 6.500.5Z" fill="#1a1a1a" /><path d="M1 15q2-5 5-9" stroke="#eee" strokeWidth="1" /></S></TrayItem>
          <Clock><div>19.09</div><div>24/06/2023</div></Clock>
          <Badge>5</Badge>
        </Tray>
        <Tooltip>Obrolan</Tooltip>
      </Taskbar>
    </Screen>
  );
}
